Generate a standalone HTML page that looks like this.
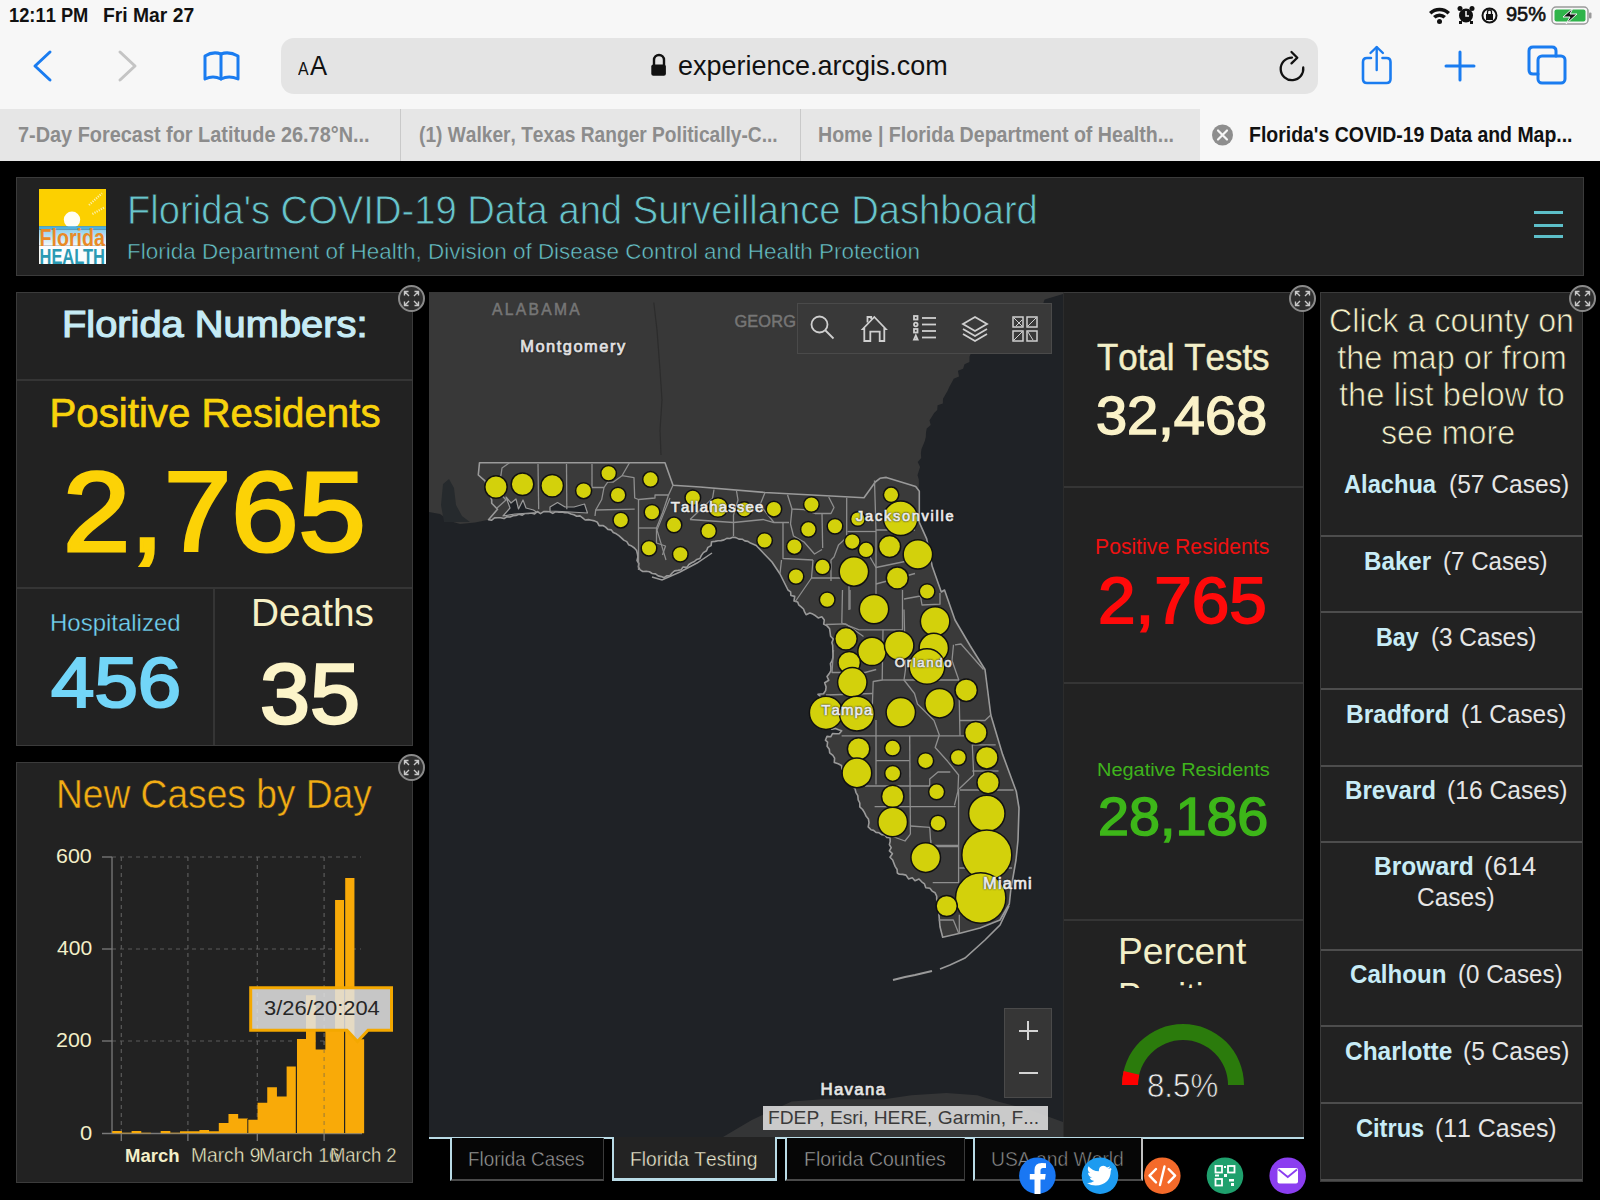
<!DOCTYPE html>
<html><head><meta charset="utf-8">
<style>
html,body{margin:0;padding:0;}
body{width:1600px;height:1200px;position:relative;overflow:hidden;background:#000;font-family:"Liberation Sans",sans-serif;}
.t{position:absolute;white-space:pre;line-height:1;transform-origin:0 0;font-kerning:none;}
.abs{position:absolute;}
.panel{position:absolute;background:#222;border:1px solid #3b3b3b;box-sizing:border-box;}
.hl{position:absolute;height:2px;background:#353535;}
.exp{position:absolute;width:27px;height:27px;border-radius:50%;background:#2e2e2e;border:2px solid #8a8a8a;box-sizing:border-box;z-index:5;}
.rowline{position:absolute;left:1321px;width:261px;height:2px;background:#4d4d4d;}
</style></head><body>
<!-- Safari chrome -->
<div class="abs" style="left:0;top:0;width:1600px;height:161px;background:#f7f7f7"></div>
<div class="abs" style="left:281px;top:37.5px;width:1037px;height:56.5px;background:#e4e4e4;border-radius:13px"></div>
<div class="abs" style="left:0;top:109px;width:1200px;height:52px;background:#e6e6e6"></div>
<div class="abs" style="left:400px;top:109px;width:1px;height:52px;background:#c9c9c9"></div>
<div class="abs" style="left:800px;top:109px;width:1px;height:52px;background:#c9c9c9"></div>
<svg class="abs" style="left:0;top:0" width="1600" height="161" viewBox="0 0 1600 161">
 <g fill="none" stroke="#1a7cf0" stroke-width="3" stroke-linecap="round" stroke-linejoin="round">
  <polyline points="50,52 35,66 50,80"/>
  <path d="M205,56 Q213,51 221,54 Q229,51 238,56 L238,79 Q229,75 221,79 Q213,75 205,79 Z"/>
  <line x1="221" y1="54" x2="221" y2="79"/>
  <path d="M1371,58 L1367,58 Q1363,58 1363,62 L1363,79 Q1363,83 1367,83 L1386.5,83 Q1390.5,83 1390.5,79 L1390.5,62 Q1390.5,58 1386.5,58 L1382.5,58" stroke-width="2.6"/>
  <polyline points="1370.5,53 1376.7,47 1382.9,53" stroke-width="2.4"/>
  <line x1="1376.7" y1="47.5" x2="1376.7" y2="70" stroke-width="2.4"/>
  <line x1="1446" y1="66" x2="1474" y2="66"/>
  <line x1="1460" y1="52" x2="1460" y2="80"/>
  <rect x="1538" y="56" width="27" height="27" rx="4"/>
  <path d="M1538,74 L1533,74 Q1529,74 1529,70 L1529,51 Q1529,47 1533,47 L1552,47 Q1556,47 1556,51 L1556,56"/>
 </g>
 <polyline points="120,52 135,66 120,80" fill="none" stroke="#c4c4c4" stroke-width="3" stroke-linecap="round" stroke-linejoin="round"/>
 <g fill="none" stroke="#111" stroke-width="2.3" stroke-linecap="round" stroke-linejoin="round">
  <path d="M1303.2,67.5 A11.3,11.3 0 1 1 1292,57.6"/>
  <polyline points="1291.5,52 1297.3,57.7 1291.5,63.4"/>
 </g>
 <!-- lock -->
 <path d="M654,65 L654,60 A5,5 0 0 1 664,60 L664,65" fill="none" stroke="#111" stroke-width="2.4"/>
 <rect x="651.3" y="64.5" width="14.6" height="11.3" rx="2" fill="#111"/>
 <!-- status icons -->
 <g fill="#111">
  <path d="M1429,12 A15,15 0 0 1 1450,12 L1447.5,14.5 A11.5,11.5 0 0 0 1431.5,14.5 Z"/>
  <path d="M1433,16 A9.5,9.5 0 0 1 1446,16 L1443.5,18.5 A6,6 0 0 0 1435.5,18.5 Z"/>
  <circle cx="1439.5" cy="21.5" r="2.5"/>
  <circle cx="1466" cy="15.5" r="7"/>
  <circle cx="1460" cy="8.5" r="2.5"/><circle cx="1472" cy="8.5" r="2.5"/>
  <rect x="1459" y="21" width="3" height="3" /><rect x="1470" y="21" width="3" height="3"/>
 </g>
 <path d="M1466,11 L1466,16 L1469,16" stroke="#f7f7f7" stroke-width="1.5" fill="none"/>
 <circle cx="1489.5" cy="15.5" r="7" fill="none" stroke="#111" stroke-width="2"/>
 <rect x="1486" y="14" width="7" height="6" fill="#111"/>
 <path d="M1487.5,14 L1487.5,12 A2,2 0 0 1 1491.5,12 L1491.5,14" stroke="#111" stroke-width="1.3" fill="none"/>
 <rect x="1552" y="7" width="36" height="17" rx="4" fill="none" stroke="#9a9a9a" stroke-width="1.5"/>
 <rect x="1554.5" y="9.5" width="31" height="12" rx="2" fill="#2fb44a"/>
 <rect x="1589" y="12.5" width="2.5" height="6" rx="1" fill="#9a9a9a"/>
 <path d="M1573,8 L1563,17 L1570,17 L1566,24 L1577,14 L1570,14 Z" fill="#111" stroke="#f7f7f7" stroke-width="1"/>
 <!-- tab close -->
 <circle cx="1222.5" cy="135" r="10.5" fill="#8e8e8e"/>
 <path d="M1218,130.5 L1227,139.5 M1227,130.5 L1218,139.5" stroke="#f7f7f7" stroke-width="2.2" stroke-linecap="round"/>
</svg>

<!-- Header -->
<div class="panel" style="left:16px;top:177px;width:1568px;height:99px"></div>
<svg class="abs" style="left:39px;top:189px" width="67" height="75" viewBox="0 0 67 75">
 <defs><linearGradient id="lg1" x1="0" y1="0" x2="0" y2="1"><stop offset="0" stop-color="#8fd0ef"/><stop offset="1" stop-color="#f2f9fc"/></linearGradient></defs>
 <rect x="0" y="0" width="67" height="37.4" fill="#fcd000"/>
 <g stroke="#fff6c0" stroke-width="2.2" stroke-dasharray="1.2,1.2" opacity="0.85">
  <line x1="50" y1="16" x2="63" y2="4.3"/><line x1="53.4" y1="25" x2="65.9" y2="18.1"/>
 </g>
 <circle cx="33" cy="30.8" r="8.2" fill="#fffef5"/>
 <rect x="0" y="37.2" width="67" height="3.4" fill="#4fb1df"/>
 <rect x="0" y="40.6" width="67" height="16" fill="url(#lg1)"/>
 <rect x="0" y="56.6" width="67" height="18.4" fill="#fbfdfe"/>
 <text x="0.5" y="56.6" font-family="Liberation Sans" font-weight="bold" font-size="23.5" fill="#e98a26" textLength="65.5" lengthAdjust="spacingAndGlyphs">Florida</text>
 <text x="0.5" y="74.6" font-family="Liberation Sans" font-weight="bold" font-size="22" fill="#2a9ab4" textLength="65.5" lengthAdjust="spacingAndGlyphs">HEALTH</text>
</svg>
<div class="abs" style="left:1534px;top:211px;width:29px;height:3px;background:#5dbfc9"></div>
<div class="abs" style="left:1534px;top:223.5px;width:29px;height:3px;background:#5dbfc9"></div>
<div class="abs" style="left:1534px;top:235px;width:29px;height:3px;background:#5dbfc9"></div>

<!-- Florida numbers -->
<div class="panel" style="left:16px;top:292px;width:397px;height:454px"></div>
<div class="hl" style="left:17px;top:378.5px;width:395px"></div>
<div class="hl" style="left:17px;top:586.5px;width:395px"></div>
<div class="abs" style="left:213px;top:587px;width:2px;height:158px;background:#353535"></div>

<!-- Chart panel -->
<div class="panel" style="left:16px;top:762px;width:397px;height:421px"></div>
<svg class="abs" style="left:0;top:0" width="420" height="1200" viewBox="0 0 420 1200">
 <g stroke="#5a5a5a" stroke-width="1.2" stroke-dasharray="4,4" fill="none">
  <line x1="112" y1="857" x2="361" y2="857"/>
  <line x1="112" y1="949" x2="361" y2="949"/>
  <line x1="112" y1="1041" x2="361" y2="1041"/>
  <line x1="121.3" y1="857" x2="121.3" y2="1133"/>
  <line x1="187.9" y1="857" x2="187.9" y2="1133"/>
  <line x1="257.3" y1="857" x2="257.3" y2="1133"/>
  <line x1="324.1" y1="857" x2="324.1" y2="1133"/>
 </g>
 <g stroke="#7a7a7a" stroke-width="1.3">
  <line x1="112" y1="857" x2="112" y2="1133.5"/>
  <line x1="102" y1="1133.5" x2="362" y2="1133.5"/>
  <line x1="102" y1="857" x2="112" y2="857"/>
  <line x1="102" y1="949" x2="112" y2="949"/>
  <line x1="102" y1="1041" x2="112" y2="1041"/>
  <line x1="121.3" y1="1133" x2="121.3" y2="1141"/>
  <line x1="187.9" y1="1133" x2="187.9" y2="1141"/>
  <line x1="257.3" y1="1133" x2="257.3" y2="1141"/>
  <line x1="324.1" y1="1133" x2="324.1" y2="1141"/>
 </g>
 <g fill="#f9aa08"><path d="M112.20,1133.20 L112.20,1130.90 L121.89,1130.90 L121.89,1132.74 L131.58,1132.74 L131.58,1130.90 L141.27,1130.90 L141.27,1132.74 L150.96,1132.74 L150.96,1133.20 L160.65,1133.20 L160.65,1130.90 L170.34,1130.90 L170.34,1132.74 L180.03,1132.74 L180.03,1131.36 L189.72,1131.36 L189.72,1131.36 L199.41,1131.36 L199.41,1129.98 L209.10,1129.98 L209.10,1131.36 L218.79,1131.36 L218.79,1123.08 L228.48,1123.08 L228.48,1113.88 L238.17,1113.88 L238.17,1118.48 L247.86,1118.48 L247.86,1119.86 L257.55,1119.86 L257.55,1102.84 L267.24,1102.84 L267.24,1087.20 L276.93,1087.20 L276.93,1096.40 L286.62,1096.40 L286.62,1066.50 L296.31,1066.50 L296.31,1038.90 L306.00,1038.90 L306.00,995.20 L315.69,995.20 L315.69,1049.48 L325.38,1049.48 L325.38,1031.08 L335.07,1031.08 L335.07,899.98 L344.76,899.98 L344.76,877.90 L354.45,877.90 L354.45,1039.36 L364.14,1039.36 L364.14,1133.20 Z"/></g>
 <line x1="296.4" y1="1039" x2="296.4" y2="1133" stroke="#222" stroke-width="1.2"/>
 <line x1="247.8" y1="1119" x2="247.8" y2="1133" stroke="#222" stroke-width="1"/>
 <line x1="344.6" y1="878" x2="344.6" y2="1133" stroke="#222" stroke-width="1.2"/>
 <g stroke="#5a5a5a" stroke-width="1" stroke-dasharray="4,4" opacity="0.6">
  <line x1="324.1" y1="1041" x2="324.1" y2="1133"/>
 </g>
 <!-- tooltip -->
 <path d="M250.7,987.8 L391.5,987.8 L391.5,1030.2 L368,1030.2 L357.5,1041.5 L347,1030.2 L250.7,1030.2 Z" fill="rgba(226,226,226,0.86)" stroke="#f4a800" stroke-width="3" stroke-linejoin="miter"/>
</svg>
<div class="t" style="left:264.16px;top:999.10px;font-size:19.48px;color:#262626;transform:scaleX(1.1258);z-index:6;">3/26/20:204</div>


<!-- Map -->
<div class="abs" style="left:429px;top:292px;width:634px;height:846px;overflow:hidden">
<svg width="634" height="846" viewBox="429 292 634 846" style="position:absolute;left:0;top:0"><rect x="429" y="292" width="634" height="846" fill="#1f2226"/><polygon fill="#343536" points="700.0,1138.0 723.0,1137.0 751.8,1120.0 791.6,1101.4 822.5,1099.3 884.4,1099.3 911.2,1095.2 946.3,1093.1 977.2,1095.2 997.8,1101.4 1030.0,1110.0 1063.0,1122.0 1063.0,1138.0"/><polygon fill="#383838" points="429.0,292.0 1063.0,292.0 1063.0,294.0 1044.6,299.4 1042.9,304.3 1037.3,303.5 1036.3,309.4 1030.5,308.3 1028.2,312.3 1024.2,313.7 1020.7,316.1 1017.3,318.4 1014.1,321.2 1010.3,323.0 1008.5,327.8 1003.0,327.0 998.8,328.7 998.8,334.7 993.7,335.1 990.4,337.4 986.7,339.3 984.6,343.1 981.4,345.6 976.8,346.4 975.9,351.5 971.3,352.4 969.5,356.6 969.4,362.1 964.5,364.2 963.1,368.7 957.9,370.7 959.0,376.6 953.7,378.7 951.6,382.8 949.4,386.7 947.5,390.9 945.3,394.8 943.0,398.7 942.8,403.5 937.6,405.3 937.2,409.9 934.1,412.9 932.0,416.6 929.5,420.3 930.7,425.0 926.7,428.4 926.0,432.6 925.8,436.9 924.8,441.1 923.2,445.1 921.4,449.2 920.9,453.6 921.2,458.1 917.7,462.0 920.1,466.9 918.7,471.2 917.5,475.3 918.8,479.6 918.9,483.7 918.5,487.9 917.1,491.9 916.5,496.1 917.8,500.3 919.3,522.3 926.7,538.8 932.2,566.3 941.3,592.0 944.5,590.0 955.0,620.0 970.0,645.5 985.0,669.5 990.8,715.0 1002.6,754.4 1016.3,791.5 1019.0,808.0 1018.0,840.0 1016.0,860.0 1010.7,890.7 1009.3,904.0 1000.0,920.0 980.0,928.0 960.0,933.3 942.7,937.3 940.0,926.7 937.9,902.5 936.7,899.5 936.7,896.1 935.1,892.8 932.1,891.1 929.9,888.3 925.8,887.7 924.5,883.9 921.7,881.8 919.0,879.0 915.0,880.8 912.3,877.7 908.5,878.9 906.0,875.1 902.7,874.4 899.3,874.2 897.3,873.0 897.1,869.5 895.1,866.4 893.9,863.2 892.7,860.0 890.0,857.2 892.4,853.7 889.4,850.9 891.2,847.6 889.4,844.6 890.2,841.4 890.0,837.7 886.9,837.4 884.7,834.9 881.6,834.7 879.1,832.8 876.0,832.4 873.6,830.4 871.1,829.8 868.2,826.9 869.0,822.7 868.4,818.9 866.0,815.9 864.5,812.6 862.6,809.5 859.8,806.9 859.8,803.0 858.2,799.8 857.8,795.7 855.9,792.3 854.9,788.2 851.8,786.3 851.5,782.6 850.0,779.7 846.9,777.8 844.1,775.7 844.4,771.6 842.1,769.1 841.4,765.5 838.2,763.7 834.3,762.4 834.6,758.1 832.9,755.4 829.7,752.9 829.3,749.2 827.1,746.2 827.6,742.1 825.4,740.2 827.0,736.4 830.7,736.8 832.5,733.6 836.1,733.8 839.4,733.6 841.7,730.8 838.6,729.8 835.5,728.4 831.8,729.3 829.4,726.1 826.2,726.0 825.9,722.4 824.7,719.0 823.4,715.6 823.3,711.9 821.2,709.3 822.6,705.7 821.8,702.6 820.1,699.9 820.5,696.5 818.0,694.3 823.5,693.7 825.6,690.6 826.1,687.0 824.7,682.8 828.8,680.3 827.0,676.5 829.3,673.6 830.9,670.6 830.9,667.2 830.4,663.7 832.1,660.7 832.9,657.5 833.0,654.5 832.8,651.5 832.8,648.5 832.7,645.5 831.9,642.5 833.2,639.0 830.6,636.2 830.1,632.5 829.6,628.8 827.0,625.9 823.7,624.1 824.3,619.9 821.8,616.7 818.2,617.9 815.6,615.8 812.8,614.1 809.8,613.1 806.1,614.7 804.6,611.9 803.5,609.0 801.2,606.9 798.7,604.8 797.6,601.9 794.0,600.9 794.7,596.4 790.9,595.5 790.6,591.8 788.0,590.0 780.0,574.0 772.0,562.0 756.2,545.5 753.4,544.2 750.5,543.1 747.9,541.4 744.8,540.9 742.2,539.2 738.9,539.1 735.9,537.6 732.8,537.3 729.9,538.5 726.8,538.4 724.0,539.9 721.0,540.6 718.0,540.8 715.0,541.4 711.6,541.7 711.1,545.6 707.9,547.4 706.5,550.7 703.4,552.6 701.4,555.4 699.9,558.5 696.8,559.4 694.4,561.5 691.6,562.8 688.9,564.5 686.9,567.3 683.1,567.0 681.1,569.8 677.9,570.4 674.6,570.9 672.1,573.0 670.0,575.6 666.6,575.9 664.3,577.7 661.3,576.6 658.2,575.9 655.5,573.9 652.2,573.5 649.4,571.8 646.2,571.3 642.8,571.5 640.2,569.9 638.4,566.9 638.9,563.5 637.0,560.5 637.9,557.0 637.4,553.7 636.6,550.5 634.4,548.0 631.7,546.1 628.6,544.7 626.8,541.6 623.8,540.1 621.4,537.8 618.9,535.6 616.3,533.8 613.3,532.6 611.3,529.9 607.9,529.4 605.6,527.1 602.9,525.5 599.1,525.6 597.4,522.3 594.5,520.9 591.5,520.2 588.5,519.6 585.2,520.0 582.6,517.8 580.0,515.9 576.7,516.2 573.9,514.8 571.0,514.0 568.1,512.7 564.9,512.8 561.9,512.0 558.9,512.2 555.8,511.6 552.8,513.4 549.7,511.7 546.6,511.5 543.6,511.6 540.5,513.6 537.4,511.5 534.6,513.9 531.3,512.9 528.3,513.4 525.1,513.4 522.3,515.1 519.0,514.3 516.0,515.4 513.0,515.7 510.0,517.0 506.9,516.8 504.0,518.6 500.7,517.7 497.6,517.8 494.5,517.9 491.7,520.2 488.5,519.7 475.0,522.5 460.0,524.0 450.0,521.0 440.0,514.0 429.0,512.0"/><polygon fill="#3a3a3a" stroke="#9a9a9a" stroke-width="1.6" stroke-linejoin="round" points="479.5,462.7 665.0,462.7 673.0,485.2 700.0,487.0 765.0,492.5 864.0,497.7 875.3,482.0 880.0,478.3 886.3,477.4 915.7,486.6 919.3,491.2 919.3,522.3 926.7,538.8 932.2,566.3 941.3,592.0 944.5,590.0 955.0,620.0 970.0,645.5 985.0,669.5 990.8,715.0 1002.6,754.4 1016.3,791.5 1019.0,808.0 1018.0,840.0 1016.0,860.0 1010.7,890.7 1009.3,904.0 1000.0,920.0 980.0,928.0 960.0,933.3 942.7,937.3 940.0,926.7 937.9,902.5 936.7,899.5 936.7,896.1 935.1,892.8 932.1,891.1 929.9,888.3 925.8,887.7 924.5,883.9 921.7,881.8 919.0,879.0 915.0,880.8 912.3,877.7 908.5,878.9 906.0,875.1 902.7,874.4 899.3,874.2 897.3,873.0 897.1,869.5 895.1,866.4 893.9,863.2 892.7,860.0 890.0,857.2 892.4,853.7 889.4,850.9 891.2,847.6 889.4,844.6 890.2,841.4 890.0,837.7 886.9,837.4 884.7,834.9 881.6,834.7 879.1,832.8 876.0,832.4 873.6,830.4 871.1,829.8 868.2,826.9 869.0,822.7 868.4,818.9 866.0,815.9 864.5,812.6 862.6,809.5 859.8,806.9 859.8,803.0 858.2,799.8 857.8,795.7 855.9,792.3 854.9,788.2 851.8,786.3 851.5,782.6 850.0,779.7 846.9,777.8 844.1,775.7 844.4,771.6 842.1,769.1 841.4,765.5 838.2,763.7 834.3,762.4 834.6,758.1 832.9,755.4 829.7,752.9 829.3,749.2 827.1,746.2 827.6,742.1 825.4,740.2 827.0,736.4 830.7,736.8 832.5,733.6 836.1,733.8 839.4,733.6 841.7,730.8 838.6,729.8 835.5,728.4 831.8,729.3 829.4,726.1 826.2,726.0 825.9,722.4 824.7,719.0 823.4,715.6 823.3,711.9 821.2,709.3 822.6,705.7 821.8,702.6 820.1,699.9 820.5,696.5 818.0,694.3 823.5,693.7 825.6,690.6 826.1,687.0 824.7,682.8 828.8,680.3 827.0,676.5 829.3,673.6 830.9,670.6 830.9,667.2 830.4,663.7 832.1,660.7 832.9,657.5 833.0,654.5 832.8,651.5 832.8,648.5 832.7,645.5 831.9,642.5 833.2,639.0 830.6,636.2 830.1,632.5 829.6,628.8 827.0,625.9 823.7,624.1 824.3,619.9 821.8,616.7 818.2,617.9 815.6,615.8 812.8,614.1 809.8,613.1 806.1,614.7 804.6,611.9 803.5,609.0 801.2,606.9 798.7,604.8 797.6,601.9 794.0,600.9 794.7,596.4 790.9,595.5 790.6,591.8 788.0,590.0 780.0,574.0 772.0,562.0 756.2,545.5 753.4,544.2 750.5,543.1 747.9,541.4 744.8,540.9 742.2,539.2 738.9,539.1 735.9,537.6 732.8,537.3 729.9,538.5 726.8,538.4 724.0,539.9 721.0,540.6 718.0,540.8 715.0,541.4 711.6,541.7 711.1,545.6 707.9,547.4 706.5,550.7 703.4,552.6 701.4,555.4 699.9,558.5 696.8,559.4 694.4,561.5 691.6,562.8 688.9,564.5 686.9,567.3 683.1,567.0 681.1,569.8 677.9,570.4 674.6,570.9 672.1,573.0 670.0,575.6 666.6,575.9 664.3,577.7 661.3,576.6 658.2,575.9 655.5,573.9 652.2,573.5 649.4,571.8 646.2,571.3 642.8,571.5 640.2,569.9 638.4,566.9 638.9,563.5 637.0,560.5 637.9,557.0 637.4,553.7 636.6,550.5 634.4,548.0 631.7,546.1 628.6,544.7 626.8,541.6 623.8,540.1 621.4,537.8 618.9,535.6 616.3,533.8 613.3,532.6 611.3,529.9 607.9,529.4 605.6,527.1 602.9,525.5 599.1,525.6 597.4,522.3 594.5,520.9 591.5,520.2 588.5,519.6 585.2,520.0 582.6,517.8 580.0,515.9 576.7,516.2 573.9,514.8 571.0,514.0 568.1,512.7 564.9,512.8 561.9,512.0 558.9,512.2 555.8,511.6 552.8,513.4 549.7,511.7 546.6,511.5 543.6,511.6 540.5,513.6 537.4,511.5 534.6,513.9 531.3,512.9 528.3,513.4 525.1,513.4 522.3,515.1 519.0,514.3 516.0,515.4 513.0,515.7 510.0,517.0 506.9,516.8 504.0,518.6 500.7,517.7 497.6,517.8 494.5,517.9 491.7,520.2 488.5,519.7 497.5,509.2 491.7,503.3 491.7,500.0 485.0,480.8 478.3,475.0"/><polygon fill="#1f2226" stroke="#9a9a9a" stroke-width="1.2" stroke-linejoin="round" points="506.0,497.0 511.0,503.0 516.0,499.0 518.5,509.0 523.0,500.0 526.0,508.0 533.5,510.0 537.0,512.5 515.0,514.0 503.0,516.0 510.0,508.0"/><polygon fill="#1f2226" stroke="#9a9a9a" stroke-width="1.2" stroke-linejoin="round" points="550.0,507.0 557.5,502.5 565.0,507.0 574.0,507.0 584.5,504.0 587.5,513.0 562.0,511.5 550.0,511.0"/><polygon fill="#262a2d" points="443.0,484.0 449.0,479.0 454.0,488.0 456.0,505.0 462.0,516.0 470.0,522.0 444.0,522.0 441.0,505.0"/><polyline fill="none" stroke="#2c2c2c" stroke-width="1.2" points="653.8,302.5 657.0,330.0 660.0,370.0 662.0,400.0 660.0,430.0 661.0,455.0"/><polyline fill="none" stroke="#8e8e8e" stroke-width="1.3" stroke-linejoin="round" points="509.5,462.7 502.0,468.0 501.0,475.0 497.0,490.0 506.0,500.0 497.0,508.0"/><polyline fill="none" stroke="#8e8e8e" stroke-width="1.3" stroke-linejoin="round" points="538.0,464.0 538.7,509.2"/><polyline fill="none" stroke="#8e8e8e" stroke-width="1.3" stroke-linejoin="round" points="566.5,464.0 566.8,509.2"/><polyline fill="none" stroke="#8e8e8e" stroke-width="1.3" stroke-linejoin="round" points="592.0,464.0 592.0,487.5 604.0,487.5 607.7,482.2 613.0,482.2 622.0,475.7 629.5,462.7"/><polyline fill="none" stroke="#8e8e8e" stroke-width="1.3" stroke-linejoin="round" points="622.0,475.7 634.0,477.7 634.7,498.0 638.5,499.5 638.5,570.0"/><polyline fill="none" stroke="#8e8e8e" stroke-width="1.3" stroke-linejoin="round" points="604.0,487.5 601.7,499.5 595.7,510.0 595.0,516.0"/><polyline fill="none" stroke="#8e8e8e" stroke-width="1.3" stroke-linejoin="round" points="595.7,510.0 634.7,509.2"/><polyline fill="none" stroke="#8e8e8e" stroke-width="1.3" stroke-linejoin="round" points="638.5,499.5 655.0,498.0 655.0,495.0 668.5,495.0 673.0,485.2"/><polyline fill="none" stroke="#8e8e8e" stroke-width="1.3" stroke-linejoin="round" points="668.5,495.0 662.5,513.0 656.5,528.0 656.5,543.0 665.5,546.0 662.5,555.0"/><polyline fill="none" stroke="#8e8e8e" stroke-width="1.3" stroke-linejoin="round" points="638.5,528.0 656.5,528.0"/><polyline fill="none" stroke="#8e8e8e" stroke-width="1.3" stroke-linejoin="round" points="690.0,519.5 733.5,522.5 763.5,519.5 774.0,522.5 789.0,522.5"/><polyline fill="none" stroke="#8e8e8e" stroke-width="1.3" stroke-linejoin="round" points="714.0,489.5 712.5,498.5 690.0,519.5"/><polyline fill="none" stroke="#8e8e8e" stroke-width="1.3" stroke-linejoin="round" points="736.5,491.0 738.0,500.0 733.5,515.0 733.5,536.0"/><polyline fill="none" stroke="#8e8e8e" stroke-width="1.3" stroke-linejoin="round" points="765.0,492.5 760.0,505.0 774.0,522.5"/><polyline fill="none" stroke="#8e8e8e" stroke-width="1.3" stroke-linejoin="round" points="787.5,494.7 792.0,509.0 804.0,509.7 815.0,513.5 831.0,513.5 834.0,507.5 828.7,497.0"/><polyline fill="none" stroke="#8e8e8e" stroke-width="1.3" stroke-linejoin="round" points="792.0,509.0 790.5,524.0 793.5,536.0 804.0,542.0 814.5,554.0 822.0,549.5"/><polyline fill="none" stroke="#8e8e8e" stroke-width="1.3" stroke-linejoin="round" points="783.0,522.5 783.0,558.5 813.0,560.0"/><polyline fill="none" stroke="#8e8e8e" stroke-width="1.3" stroke-linejoin="round" points="822.0,513.5 822.7,548.0"/><polyline fill="none" stroke="#8e8e8e" stroke-width="1.3" stroke-linejoin="round" points="846.7,497.7 846.7,537.5 838.5,545.0 834.0,557.0 831.0,560.0 831.0,581.0"/><polyline fill="none" stroke="#8e8e8e" stroke-width="1.3" stroke-linejoin="round" points="781.5,560.0 780.0,573.5"/><polyline fill="none" stroke="#8e8e8e" stroke-width="1.3" stroke-linejoin="round" points="813.0,560.0 811.5,578.0 849.0,578.0 849.0,610.0"/><polyline fill="none" stroke="#8e8e8e" stroke-width="1.3" stroke-linejoin="round" points="811.5,578.0 795.0,602.0"/><polyline fill="none" stroke="#8e8e8e" stroke-width="1.3" stroke-linejoin="round" points="874.5,480.5 876.0,530.0 876.0,609.5"/><polyline fill="none" stroke="#8e8e8e" stroke-width="1.3" stroke-linejoin="round" points="876.0,530.0 915.0,530.0"/><polyline fill="none" stroke="#8e8e8e" stroke-width="1.3" stroke-linejoin="round" points="847.5,531.5 876.0,531.5"/><polyline fill="none" stroke="#8e8e8e" stroke-width="1.3" stroke-linejoin="round" points="870.0,557.0 876.0,567.5 912.0,560.0"/><polyline fill="none" stroke="#8e8e8e" stroke-width="1.3" stroke-linejoin="round" points="876.0,584.0 915.0,573.5"/><polyline fill="none" stroke="#8e8e8e" stroke-width="1.3" stroke-linejoin="round" points="842.5,590.0 841.8,623.0 859.0,629.8 902.5,629.8 902.5,590.0"/><polyline fill="none" stroke="#8e8e8e" stroke-width="1.3" stroke-linejoin="round" points="850.0,590.0 850.0,609.5"/><polyline fill="none" stroke="#8e8e8e" stroke-width="1.3" stroke-linejoin="round" points="883.0,629.8 882.2,680.0 873.2,681.5 871.8,720.5"/><polyline fill="none" stroke="#8e8e8e" stroke-width="1.3" stroke-linejoin="round" points="904.0,609.5 905.5,669.5 904.0,680.0 958.0,680.0"/><polyline fill="none" stroke="#8e8e8e" stroke-width="1.3" stroke-linejoin="round" points="882.2,680.0 904.0,680.0"/><polyline fill="none" stroke="#8e8e8e" stroke-width="1.3" stroke-linejoin="round" points="833.5,650.0 832.0,672.5 865.0,672.5 876.2,669.5"/><polyline fill="none" stroke="#8e8e8e" stroke-width="1.3" stroke-linejoin="round" points="826.0,695.0 872.5,693.5"/><polyline fill="none" stroke="#8e8e8e" stroke-width="1.3" stroke-linejoin="round" points="904.0,680.0 914.5,693.5 917.5,704.0 934.0,720.5 939.3,735.0 935.2,747.5 947.6,761.3 958.6,775.0 957.9,791.5 954.4,805.3"/><polyline fill="none" stroke="#8e8e8e" stroke-width="1.3" stroke-linejoin="round" points="953.5,644.8 952.0,660.5 958.8,680.0 960.0,735.8"/><polyline fill="none" stroke="#8e8e8e" stroke-width="1.3" stroke-linejoin="round" points="904.0,599.0 920.5,596.0 922.0,605.0 940.0,604.2 940.0,593.0"/><polyline fill="none" stroke="#8e8e8e" stroke-width="1.3" stroke-linejoin="round" points="826.0,624.5 845.5,623.8 863.5,636.5"/><polyline fill="none" stroke="#8e8e8e" stroke-width="1.3" stroke-linejoin="round" points="841.6,735.8 964.0,735.8"/><polyline fill="none" stroke="#8e8e8e" stroke-width="1.3" stroke-linejoin="round" points="876.0,720.0 876.0,784.6"/><polyline fill="none" stroke="#8e8e8e" stroke-width="1.3" stroke-linejoin="round" points="876.0,760.6 909.7,760.6"/><polyline fill="none" stroke="#8e8e8e" stroke-width="1.3" stroke-linejoin="round" points="909.7,735.8 910.4,834.2"/><polyline fill="none" stroke="#8e8e8e" stroke-width="1.3" stroke-linejoin="round" points="865.0,786.0 929.7,786.0 929.7,779.0 938.0,772.0 950.3,772.0"/><polyline fill="none" stroke="#8e8e8e" stroke-width="1.3" stroke-linejoin="round" points="874.6,806.7 955.8,806.7"/><polyline fill="none" stroke="#8e8e8e" stroke-width="1.3" stroke-linejoin="round" points="959.2,788.8 973.7,775.0 972.3,744.8 995.7,744.8"/><polyline fill="none" stroke="#8e8e8e" stroke-width="1.3" stroke-linejoin="round" points="960.0,790.0 1013.6,790.0"/><polyline fill="none" stroke="#8e8e8e" stroke-width="1.3" stroke-linejoin="round" points="958.6,789.0 958.6,882.7 932.7,882.7"/><polyline fill="none" stroke="#8e8e8e" stroke-width="1.3" stroke-linejoin="round" points="910.4,826.0 929.7,827.3 931.0,846.5 958.6,846.5"/><polyline fill="none" stroke="#8e8e8e" stroke-width="1.3" stroke-linejoin="round" points="972.3,771.0 998.5,771.0"/><polyline fill="none" stroke="#8e8e8e" stroke-width="1.3" stroke-linejoin="round" points="889.8,835.5 905.0,841.0 910.4,834.2"/><polyline fill="none" stroke="#8e8e8e" stroke-width="1.3" stroke-linejoin="round" points="930.7,840.0 930.7,845.3 958.7,845.3"/><polyline fill="none" stroke="#8e8e8e" stroke-width="1.3" stroke-linejoin="round" points="959.3,868.0 1012.0,868.0"/><polyline fill="none" stroke="#8e8e8e" stroke-width="1.3" stroke-linejoin="round" points="959.3,914.7 959.3,933.3"/><polyline fill="none" stroke="#8e8e8e" stroke-width="1.3" stroke-linejoin="round" points="938.7,920.0 953.3,920.0 958.7,933.3"/><polyline fill="none" stroke="#8e8e8e" stroke-width="1.3" stroke-linejoin="round" points="990.8,715.0 985.0,720.5 959.5,720.5"/><polyline fill="none" stroke="#8e8e8e" stroke-width="1.3" stroke-linejoin="round" points="955.0,644.8 961.0,644.0 983.5,669.5"/><polyline fill="none" stroke="#9a9a9a" stroke-width="1.5" points="652.0,577.0 662.0,580.0 680.0,572.0 697.0,563.0 712.0,553.0"/><polyline fill="none" stroke="#8e8e8e" stroke-width="1.2" points="670.0,498.0 657.0,530.0 666.0,560.0"/><polyline fill="none" stroke="#9a9a9a" stroke-width="1.6" points="1009.0,906.0 1000.0,925.0 985.0,940.0 965.0,958.0 950.0,965.0 940.0,969.0"/><polyline fill="none" stroke="#9a9a9a" stroke-width="2" points="932.0,971.0 915.0,975.0 905.0,977.0 893.0,980.0"/><circle fill="#d3d10b" stroke="#111" stroke-width="1.5" cx="496.0" cy="487.0" r="11.2"/><circle fill="#d3d10b" stroke="#111" stroke-width="1.5" cx="522.5" cy="484.3" r="11.3"/><circle fill="#d3d10b" stroke="#111" stroke-width="1.5" cx="552.2" cy="485.8" r="11.3"/><circle fill="#d3d10b" stroke="#111" stroke-width="1.5" cx="583.6" cy="490.7" r="8.0"/><circle fill="#d3d10b" stroke="#111" stroke-width="1.5" cx="608.6" cy="473.3" r="7.8"/><circle fill="#d3d10b" stroke="#111" stroke-width="1.5" cx="618.0" cy="495.0" r="7.8"/><circle fill="#d3d10b" stroke="#111" stroke-width="1.5" cx="620.8" cy="520.1" r="7.8"/><circle fill="#d3d10b" stroke="#111" stroke-width="1.5" cx="650.5" cy="479.4" r="7.8"/><circle fill="#d3d10b" stroke="#111" stroke-width="1.5" cx="652.0" cy="512.2" r="7.8"/><circle fill="#d3d10b" stroke="#111" stroke-width="1.5" cx="674.0" cy="524.9" r="7.8"/><circle fill="#d3d10b" stroke="#111" stroke-width="1.5" cx="649.0" cy="548.3" r="7.8"/><circle fill="#d3d10b" stroke="#111" stroke-width="1.5" cx="680.3" cy="554.2" r="7.8"/><circle fill="#d3d10b" stroke="#111" stroke-width="1.5" cx="692.8" cy="497.8" r="7.8"/><circle fill="#d3d10b" stroke="#111" stroke-width="1.5" cx="718.0" cy="507.5" r="9.8"/><circle fill="#d3d10b" stroke="#111" stroke-width="1.5" cx="744.3" cy="509.4" r="7.6"/><circle fill="#d3d10b" stroke="#111" stroke-width="1.5" cx="773.9" cy="509.1" r="7.8"/><circle fill="#d3d10b" stroke="#111" stroke-width="1.5" cx="811.4" cy="504.5" r="7.8"/><circle fill="#d3d10b" stroke="#111" stroke-width="1.5" cx="708.6" cy="530.9" r="7.8"/><circle fill="#d3d10b" stroke="#111" stroke-width="1.5" cx="764.6" cy="540.5" r="7.8"/><circle fill="#d3d10b" stroke="#111" stroke-width="1.5" cx="794.4" cy="546.6" r="7.8"/><circle fill="#d3d10b" stroke="#111" stroke-width="1.5" cx="808.4" cy="529.4" r="7.8"/><circle fill="#d3d10b" stroke="#111" stroke-width="1.5" cx="796.0" cy="576.5" r="7.8"/><circle fill="#d3d10b" stroke="#111" stroke-width="1.5" cx="835.0" cy="526.2" r="7.8"/><circle fill="#d3d10b" stroke="#111" stroke-width="1.5" cx="852.2" cy="541.6" r="7.8"/><circle fill="#d3d10b" stroke="#111" stroke-width="1.5" cx="866.1" cy="549.9" r="7.8"/><circle fill="#d3d10b" stroke="#111" stroke-width="1.5" cx="857.9" cy="519.0" r="7.3"/><circle fill="#d3d10b" stroke="#111" stroke-width="1.5" cx="891.1" cy="494.8" r="7.7"/><circle fill="#d3d10b" stroke="#111" stroke-width="1.5" cx="900.6" cy="518.3" r="17.2"/><circle fill="#d3d10b" stroke="#111" stroke-width="1.5" cx="889.6" cy="546.5" r="11.0"/><circle fill="#d3d10b" stroke="#111" stroke-width="1.5" cx="917.9" cy="554.4" r="14.7"/><circle fill="#d3d10b" stroke="#111" stroke-width="1.5" cx="822.5" cy="566.9" r="7.8"/><circle fill="#d3d10b" stroke="#111" stroke-width="1.5" cx="853.9" cy="571.5" r="14.7"/><circle fill="#d3d10b" stroke="#111" stroke-width="1.5" cx="897.3" cy="577.9" r="11.0"/><circle fill="#d3d10b" stroke="#111" stroke-width="1.5" cx="927.1" cy="591.5" r="7.8"/><circle fill="#d3d10b" stroke="#111" stroke-width="1.5" cx="827.2" cy="599.8" r="7.8"/><circle fill="#d3d10b" stroke="#111" stroke-width="1.5" cx="874.0" cy="609.1" r="14.7"/><circle fill="#d3d10b" stroke="#111" stroke-width="1.5" cx="935.1" cy="621.4" r="14.7"/><circle fill="#d3d10b" stroke="#111" stroke-width="1.5" cx="846.0" cy="638.8" r="11.2"/><circle fill="#d3d10b" stroke="#111" stroke-width="1.5" cx="872.0" cy="651.4" r="14.2"/><circle fill="#d3d10b" stroke="#111" stroke-width="1.5" cx="899.2" cy="645.6" r="14.7"/><circle fill="#d3d10b" stroke="#111" stroke-width="1.5" cx="933.8" cy="648.0" r="14.7"/><circle fill="#d3d10b" stroke="#111" stroke-width="1.5" cx="927.0" cy="666.5" r="17.8"/><circle fill="#d3d10b" stroke="#111" stroke-width="1.5" cx="849.2" cy="662.7" r="11.2"/><circle fill="#d3d10b" stroke="#111" stroke-width="1.5" cx="852.3" cy="682.3" r="14.7"/><circle fill="#d3d10b" stroke="#111" stroke-width="1.5" cx="966.2" cy="690.2" r="11.2"/><circle fill="#d3d10b" stroke="#111" stroke-width="1.5" cx="939.6" cy="703.2" r="14.7"/><circle fill="#d3d10b" stroke="#111" stroke-width="1.5" cx="900.8" cy="712.3" r="14.7"/><circle fill="#d3d10b" stroke="#111" stroke-width="1.5" cx="826.0" cy="712.8" r="16.6"/><circle fill="#d3d10b" stroke="#111" stroke-width="1.5" cx="856.9" cy="713.6" r="17.4"/><circle fill="#d3d10b" stroke="#111" stroke-width="1.5" cx="975.8" cy="732.7" r="11.2"/><circle fill="#d3d10b" stroke="#111" stroke-width="1.5" cx="858.6" cy="748.9" r="11.2"/><circle fill="#d3d10b" stroke="#111" stroke-width="1.5" cx="892.6" cy="748.1" r="8.0"/><circle fill="#d3d10b" stroke="#111" stroke-width="1.5" cx="925.6" cy="760.7" r="8.0"/><circle fill="#d3d10b" stroke="#111" stroke-width="1.5" cx="958.3" cy="757.5" r="8.0"/><circle fill="#d3d10b" stroke="#111" stroke-width="1.5" cx="986.8" cy="757.7" r="11.2"/><circle fill="#d3d10b" stroke="#111" stroke-width="1.5" cx="856.9" cy="772.9" r="14.8"/><circle fill="#d3d10b" stroke="#111" stroke-width="1.5" cx="892.7" cy="773.4" r="8.0"/><circle fill="#d3d10b" stroke="#111" stroke-width="1.5" cx="988.1" cy="782.6" r="11.2"/><circle fill="#d3d10b" stroke="#111" stroke-width="1.5" cx="892.7" cy="796.5" r="11.2"/><circle fill="#d3d10b" stroke="#111" stroke-width="1.5" cx="936.6" cy="791.8" r="8.0"/><circle fill="#d3d10b" stroke="#111" stroke-width="1.5" cx="986.8" cy="813.5" r="18.2"/><circle fill="#d3d10b" stroke="#111" stroke-width="1.5" cx="892.7" cy="822.0" r="14.8"/><circle fill="#d3d10b" stroke="#111" stroke-width="1.5" cx="938.0" cy="823.2" r="8.0"/><circle fill="#d3d10b" stroke="#111" stroke-width="1.5" cx="986.8" cy="855.0" r="25.0"/><circle fill="#d3d10b" stroke="#111" stroke-width="1.5" cx="925.7" cy="857.6" r="14.8"/><circle fill="#d3d10b" stroke="#111" stroke-width="1.5" cx="980.7" cy="898.0" r="25.2"/><circle fill="#d3d10b" stroke="#111" stroke-width="1.5" cx="946.7" cy="906.0" r="10.6"/></svg>
<div class="abs" style="left:367.7px;top:10.7px;width:255.7px;height:51.6px;background:#393939;border:1px solid #4a4a4a;box-sizing:border-box"></div>
<svg class="abs" style="left:367px;top:10px" width="257" height="53" viewBox="796 302 257 53">
 <g fill="none" stroke="#cfcfcf" stroke-width="1.8">
  <circle cx="819.5" cy="324.5" r="8"/>
  <line x1="825" y1="330" x2="833.5" y2="338.5"/>
  <path d="M870.3,341 L864.3,341 L864.3,329 L862.8,329 L874.3,317 L885.8,329 L884.3,329 L884.3,341 L879.7,341 L879.7,331.6 L870.3,331.6 Z"/>
  <path d="M867.5,322.5 L867.5,317 L871.2,317 L871.2,319"/>
  <line x1="922" y1="318" x2="936" y2="318"/><line x1="922" y1="324.5" x2="936" y2="324.5"/><line x1="922" y1="331" x2="936" y2="331"/><line x1="922" y1="337.5" x2="936" y2="337.5"/>
  <rect x="914" y="316" width="3.5" height="3.5"/><circle cx="915.8" cy="324.5" r="1.8"/><rect x="914" y="329" width="3.5" height="3.5"/><path d="M914,339.5 L915.8,335.5 L917.6,339.5 Z"/>
  <path d="M963,324 L975,317 L987,324 L975,331 Z"/>
  <path d="M963,329 L975,336 L987,329"/>
  <path d="M963,334 L975,341 L987,334"/>
  <rect x="1013" y="317" width="10" height="10" stroke-width="1.5"/><rect x="1027" y="317" width="10" height="10" stroke-width="1.5"/>
  <rect x="1013" y="331" width="10" height="10" stroke-width="1.5"/><rect x="1027" y="331" width="10" height="10" stroke-width="1.5"/>
  <path d="M1014,318 L1022,326 M1016,326 L1022,320 M1028,326 L1036,318 M1014,340 L1022,332 M1028,332 L1033,340" stroke-width="1"/>
 </g>
</svg>
<!-- zoom control -->
<div class="abs" style="left:575px;top:716.2px;width:48px;height:89.5px;background:#363636;border:1px solid #4a4a4a;box-sizing:border-box"></div>
<div class="abs" style="left:589.5px;top:737.5px;width:19px;height:2px;background:#d4d4d4"></div>
<div class="abs" style="left:598px;top:729px;width:2px;height:19px;background:#d4d4d4"></div>
<div class="abs" style="left:589.5px;top:779.5px;width:19px;height:2px;background:#d4d4d4"></div>
<!-- attribution -->
<div class="abs" style="left:334px;top:814px;width:285px;height:24px;background:rgba(215,215,215,0.92)"></div>
</div>
<!-- map labels -->
<div class="t" style="left:491.97px;top:301.52px;font-size:15.63px;color:#767676;z-index:4;-webkit-text-stroke:0.50px #767676;letter-spacing:2.333px;">ALABAMA</div>
<div class="t" style="left:734.43px;top:312.65px;font-size:16.35px;color:#767676;z-index:4;-webkit-text-stroke:0.50px #767676;letter-spacing:0.168px;">GEORG</div>
<div class="t" style="left:520.25px;top:337.74px;font-size:16.42px;color:#e2e2e2;text-shadow:0 0 2px #222,0 0 2px #222,0 0 1px #222;z-index:4;-webkit-text-stroke:0.70px #e2e2e2;letter-spacing:1.517px;">Montgomery</div>
<div class="t" style="left:670.81px;top:499.87px;font-size:14.97px;color:#ececec;text-shadow:0 0 2px #222,0 0 2px #222,0 0 1px #222;z-index:4;-webkit-text-stroke:0.70px #ececec;letter-spacing:1.178px;">Tallahassee</div>
<div class="t" style="left:856.12px;top:509.34px;font-size:14.53px;color:#ececec;text-shadow:0 0 2px #222,0 0 2px #222,0 0 1px #222;z-index:4;-webkit-text-stroke:0.70px #ececec;letter-spacing:1.738px;">Jacksonville</div>
<div class="t" style="left:894.72px;top:656.45px;font-size:13.23px;color:#e6e6e6;text-shadow:0 0 2px #222,0 0 2px #222,0 0 1px #222;z-index:4;-webkit-text-stroke:0.70px #e6e6e6;letter-spacing:1.638px;">Orlando</div>
<div class="t" style="left:821.26px;top:702.97px;font-size:14.97px;color:#ececec;text-shadow:0 0 2px #222,0 0 2px #222,0 0 1px #222;z-index:4;-webkit-text-stroke:0.70px #ececec;letter-spacing:1.098px;">Tampa</div>
<div class="t" style="left:983.00px;top:874.74px;font-size:16.42px;color:#ececec;text-shadow:0 0 2px #222,0 0 2px #222,0 0 1px #222;z-index:4;-webkit-text-stroke:0.70px #ececec;letter-spacing:1.240px;">Miami</div>
<div class="t" style="left:820.47px;top:1081.57px;font-size:16.86px;color:#e6e6e6;text-shadow:0 0 2px #222,0 0 2px #222,0 0 1px #222;z-index:4;-webkit-text-stroke:0.70px #e6e6e6;letter-spacing:1.294px;">Havana</div>
<div class="t" style="left:768.42px;top:1108.75px;font-size:18.60px;color:#3a3a3a;transform:scaleX(1.0334);z-index:4;">FDEP, Esri, HERE, Garmin, F...</div>


<!-- Total tests panel -->
<div class="panel" style="left:1063px;top:292px;width:241px;height:846px;border-left-color:#2c2c2c"></div>
<div class="hl" style="left:1064px;top:485.5px;width:239px"></div>
<div class="hl" style="left:1064px;top:682px;width:239px"></div>
<div class="hl" style="left:1064px;top:919px;width:239px"></div>
<svg class="abs" style="left:1110px;top:1015px" width="150" height="80" viewBox="1110 1015 150 80">
 <path d="M1122,1085 A61,61 0 0 1 1244,1085 L1228,1085 A45,45 0 0 0 1138,1085 Z" fill="#2b7b0c"/>
 <path d="M1122,1085 A61,61 0 0 1 1123.6,1071 L1139.3,1074.7 A45,45 0 0 0 1138,1085 Z" fill="#f00"/>
</svg>

<!-- bottom strip -->
<div class="abs" style="left:429px;top:1136.5px;width:875px;height:2px;background:#b9dbe6"></div>
<div class="abs" style="left:450px;top:1138px;width:154px;height:42.5px;background:#060606;border-left:2px solid #b9dbe6;border-right:1px solid #3a3a3a;border-bottom:2px solid #4a4a4a;box-sizing:border-box"></div>
<div class="abs" style="left:612px;top:1137px;width:165px;height:44px;background:#232323;border-left:2px solid #b9dbe6;border-right:2px solid #b9dbe6;border-bottom:3px solid #b9dbe6;box-sizing:border-box"></div>
<div class="abs" style="left:785px;top:1138px;width:180px;height:42.5px;background:#060606;border-left:2px solid #b9dbe6;border-right:1px solid #3a3a3a;border-bottom:2px solid #4a4a4a;box-sizing:border-box"></div>
<div class="abs" style="left:973px;top:1138px;width:170px;height:42.5px;background:#060606;border-left:2px solid #b9dbe6;border-right:2px solid #c0c0c0;border-bottom:2px solid #4a4a4a;box-sizing:border-box"></div>

<!-- Right list -->
<div class="panel" style="left:1320px;top:292px;width:263px;height:890px"></div>
<div class="rowline" style="top:535px"></div>
<div class="rowline" style="top:611px"></div>
<div class="rowline" style="top:688px"></div>
<div class="rowline" style="top:764.5px"></div>
<div class="rowline" style="top:841px"></div>
<div class="rowline" style="top:948.5px"></div>
<div class="rowline" style="top:1025px"></div>
<div class="rowline" style="top:1102px"></div>
<div class="rowline" style="top:1179px"></div>

<!-- expand buttons -->
<div class="exp" style="left:398.3px;top:285.0px"><svg width="23" height="23" viewBox="0 0 23 23" style="position:absolute;left:0;top:0"><g stroke="#c8c8c8" stroke-width="1.4" fill="none"><path d="M4.5,8.5 L4.5,4.5 L8.5,4.5 M4.5,4.5 L9,9 M14.5,4.5 L18.5,4.5 L18.5,8.5 M18.5,4.5 L14,9 M4.5,14.5 L4.5,18.5 L8.5,18.5 M4.5,18.5 L9,14 M18.5,14.5 L18.5,18.5 L14.5,18.5 M18.5,18.5 L14,14"/></g></svg></div>
<div class="exp" style="left:398.1px;top:754.3px"><svg width="23" height="23" viewBox="0 0 23 23" style="position:absolute;left:0;top:0"><g stroke="#c8c8c8" stroke-width="1.4" fill="none"><path d="M4.5,8.5 L4.5,4.5 L8.5,4.5 M4.5,4.5 L9,9 M14.5,4.5 L18.5,4.5 L18.5,8.5 M18.5,4.5 L14,9 M4.5,14.5 L4.5,18.5 L8.5,18.5 M4.5,18.5 L9,14 M18.5,14.5 L18.5,18.5 L14.5,18.5 M18.5,18.5 L14,14"/></g></svg></div>
<div class="exp" style="left:1288.7px;top:284.8px"><svg width="23" height="23" viewBox="0 0 23 23" style="position:absolute;left:0;top:0"><g stroke="#c8c8c8" stroke-width="1.4" fill="none"><path d="M4.5,8.5 L4.5,4.5 L8.5,4.5 M4.5,4.5 L9,9 M14.5,4.5 L18.5,4.5 L18.5,8.5 M18.5,4.5 L14,9 M4.5,14.5 L4.5,18.5 L8.5,18.5 M4.5,18.5 L9,14 M18.5,14.5 L18.5,18.5 L14.5,18.5 M18.5,18.5 L14,14"/></g></svg></div>
<div class="exp" style="left:1569.3px;top:284.9px"><svg width="23" height="23" viewBox="0 0 23 23" style="position:absolute;left:0;top:0"><g stroke="#c8c8c8" stroke-width="1.4" fill="none"><path d="M4.5,8.5 L4.5,4.5 L8.5,4.5 M4.5,4.5 L9,9 M14.5,4.5 L18.5,4.5 L18.5,8.5 M18.5,4.5 L14,9 M4.5,14.5 L4.5,18.5 L8.5,18.5 M4.5,18.5 L9,14 M18.5,14.5 L18.5,18.5 L14.5,18.5 M18.5,18.5 L14,14"/></g></svg></div>


<div class="t" style="left:8.85px;top:4.77px;font-size:20.35px;color:#111;font-weight:bold;transform:scaleX(0.8998);">12:11 PM</div>
<div class="t" style="left:102.71px;top:4.77px;font-size:20.35px;color:#111;font-weight:bold;transform:scaleX(0.9481);">Fri Mar 27</div>
<div class="t" style="left:1506.36px;top:5.21px;font-size:19.48px;color:#111;transform:scaleX(1.0274);-webkit-text-stroke:0.60px #111;">95%</div>
<div class="t" style="left:297.97px;top:59.62px;font-size:18.17px;color:#111;transform:scaleX(0.8716);">A</div>
<div class="t" style="left:309.95px;top:51.62px;font-size:27.62px;color:#111;transform:scaleX(0.9284);">A</div>
<div class="t" style="left:677.85px;top:51.59px;font-size:27.65px;color:#111;transform:scaleX(0.9757);">experience.arcgis.com</div>
<div class="t" style="left:18.15px;top:124.71px;font-size:21.37px;color:#8c8c8c;font-weight:bold;transform:scaleX(0.9309);">7-Day Forecast for Latitude 26.78°N...</div>
<div class="t" style="left:419.05px;top:124.71px;font-size:21.37px;color:#8c8c8c;font-weight:bold;transform:scaleX(0.8966);">(1) Walker, Texas Ranger Politically-C...</div>
<div class="t" style="left:817.69px;top:124.71px;font-size:21.37px;color:#8c8c8c;font-weight:bold;transform:scaleX(0.9174);">Home | Florida Department of Health...</div>
<div class="t" style="left:1249.40px;top:124.71px;font-size:21.37px;color:#111;font-weight:bold;transform:scaleX(0.9108);">Florida's COVID-19 Data and Map...</div>
<div class="t" style="left:126.97px;top:189.69px;font-size:40.41px;color:#68c5cc;transform:scaleX(0.9444);-webkit-text-stroke:0.80px #222;">Florida's COVID-19 Data and Surveillance Dashboard</div>
<div class="t" style="left:127.41px;top:241.76px;font-size:21.37px;color:#68c5cc;transform:scaleX(1.0520);-webkit-text-stroke:0.50px #222;">Florida Department of Health, Division of Disease Control and Health Protection</div>
<div class="t" style="left:62.33px;top:305.85px;font-size:37.50px;color:#c6ebf5;transform:scaleX(1.0623);-webkit-text-stroke:1.20px #c6ebf5;">Florida Numbers:</div>
<div class="t" style="left:49.45px;top:393.86px;font-size:40.26px;color:#f8d20c;-webkit-text-stroke:0.70px #f8d20c;">Positive Residents</div>
<div class="t" style="left:62.72px;top:455.24px;font-size:114.04px;color:#fcd206;transform:scaleX(1.0609);-webkit-text-stroke:3.20px #fcd206;">2,765</div>
<div class="t" style="left:49.68px;top:610.92px;font-size:24.13px;color:#72d3f2;transform:scaleX(0.9938);-webkit-text-stroke:0.30px #222;">Hospitalized</div>
<div class="t" style="left:50.61px;top:647.64px;font-size:70.34px;color:#72d5f8;transform:scaleX(1.1095);-webkit-text-stroke:2.20px #72d5f8;">456</div>
<div class="t" style="left:251.42px;top:594.42px;font-size:38.95px;color:#f6f0c6;transform:scaleX(0.9965);">Deaths</div>
<div class="t" style="left:260.48px;top:651.25px;font-size:85.10px;color:#fcf4c9;transform:scaleX(1.0564);-webkit-text-stroke:2.60px #fcf4c9;">35</div>
<div class="t" style="left:56.20px;top:774.61px;font-size:39.97px;color:#f3ad14;transform:scaleX(0.9292);-webkit-text-stroke:0.50px #222;">New Cases by Day</div>
<div class="t" style="left:56.11px;top:847.46px;font-size:19.77px;color:#f3efc8;transform:scaleX(1.0830);">600</div>
<div class="t" style="left:56.72px;top:939.46px;font-size:19.77px;color:#f3efc8;transform:scaleX(1.0642);">400</div>
<div class="t" style="left:56.12px;top:1031.46px;font-size:19.77px;color:#f3efc8;transform:scaleX(1.0826);">200</div>
<div class="t" style="left:79.64px;top:1123.66px;font-size:19.77px;color:#f3efc8;transform:scaleX(1.1110);">0</div>
<div class="t" style="left:124.56px;top:1146.60px;font-size:18.90px;color:#f3efc8;font-weight:bold;transform:scaleX(0.9809);">March</div>
<div class="t" style="left:191.22px;top:1146.31px;font-size:19.48px;color:#f3efc8;transform:scaleX(0.9862);-webkit-text-stroke:0.40px #222;">March 9</div>
<div class="t" style="left:259.21px;top:1146.31px;font-size:19.48px;color:#f3efc8;transform:scaleX(0.9958);-webkit-text-stroke:0.40px #222;">March 16</div>
<div class="t" style="left:330.09px;top:1146.31px;font-size:19.48px;color:#f3efc8;transform:scaleX(0.9457);-webkit-text-stroke:0.40px #222;">March 2</div>
<div class="t" style="left:1096.67px;top:340.13px;font-size:36.05px;color:#f3efc8;transform:scaleX(0.9678);-webkit-text-stroke:0.50px #f3efc8;">Total Tests</div>
<div class="t" style="left:1096.47px;top:390.36px;font-size:52.72px;color:#faf2c8;transform:scaleX(1.0614);-webkit-text-stroke:1.40px #faf2c8;">32,468</div>
<div class="t" style="left:1094.96px;top:536.09px;font-size:22.09px;color:#ee1111;transform:scaleX(0.9596);">Positive Residents</div>
<div class="t" style="left:1097.60px;top:569.16px;font-size:64.18px;color:#ff0a0a;transform:scaleX(1.0518);-webkit-text-stroke:1.80px #ff0a0a;">2,765</div>
<div class="t" style="left:1096.56px;top:761.40px;font-size:18.90px;color:#3fb41c;transform:scaleX(1.0550);">Negative Residents</div>
<div class="t" style="left:1097.75px;top:790.69px;font-size:52.87px;color:#3db619;transform:scaleX(1.0535);-webkit-text-stroke:1.50px #3db619;">28,186</div>
<div class="t" style="left:1117.95px;top:934.23px;font-size:36.34px;color:#f3efc8;transform:scaleX(1.0247);">Percent</div>
<div style="position:absolute;left:1064px;top:970px;width:239px;height:17.5px;overflow:hidden"><div class="t" style="left:54.13px;top:9.23px;font-size:36.34px;color:#f3efc8;transform:scaleX(0.9622);">Positive</div>
</div>
<div class="t" style="left:1147.29px;top:1068.60px;font-size:33.95px;color:#ececec;transform:scaleX(0.9196);-webkit-text-stroke:0.70px #222;">8.5%</div>
<div class="t" style="left:1329.42px;top:305.18px;font-size:32.56px;color:#f3efc8;transform:scaleX(0.9883);-webkit-text-stroke:0.70px #222;">Click a county on</div>
<div class="t" style="left:1337.16px;top:342.38px;font-size:32.56px;color:#f3efc8;-webkit-text-stroke:0.70px #222;">the map or from</div>
<div class="t" style="left:1339.15px;top:379.38px;font-size:32.56px;color:#f3efc8;transform:scaleX(1.0065);-webkit-text-stroke:0.70px #222;">the list below to</div>
<div class="t" style="left:1381.05px;top:416.68px;font-size:32.56px;color:#f3efc8;transform:scaleX(0.9883);-webkit-text-stroke:0.70px #222;">see more</div>
<div class="t" style="left:1343.81px;top:471.62px;font-size:25.73px;color:#c8ecf6;font-weight:bold;transform:scaleX(0.9196);">Alachua</div>
<div class="t" style="left:1448.98px;top:471.62px;font-size:25.73px;color:#e6e6e6;transform:scaleX(0.9549);">(57 Cases)</div>
<div class="t" style="left:1364.08px;top:548.92px;font-size:25.73px;color:#c8ecf6;font-weight:bold;transform:scaleX(0.9394);">Baker</div>
<div class="t" style="left:1443.40px;top:548.92px;font-size:25.73px;color:#e6e6e6;transform:scaleX(0.9380);">(7 Cases)</div>
<div class="t" style="left:1376.34px;top:625.32px;font-size:25.73px;color:#c8ecf6;font-weight:bold;transform:scaleX(0.9066);">Bay</div>
<div class="t" style="left:1431.19px;top:625.32px;font-size:25.73px;color:#e6e6e6;transform:scaleX(0.9453);">(3 Cases)</div>
<div class="t" style="left:1345.96px;top:701.82px;font-size:25.73px;color:#c8ecf6;font-weight:bold;transform:scaleX(0.9534);">Bradford</div>
<div class="t" style="left:1460.99px;top:701.82px;font-size:25.73px;color:#e6e6e6;transform:scaleX(0.9453);">(1 Cases)</div>
<div class="t" style="left:1345.09px;top:778.32px;font-size:25.73px;color:#c8ecf6;font-weight:bold;transform:scaleX(0.9369);">Brevard</div>
<div class="t" style="left:1447.37px;top:778.32px;font-size:25.73px;color:#e6e6e6;transform:scaleX(0.9574);">(16 Cases)</div>
<div class="t" style="left:1373.85px;top:854.02px;font-size:25.73px;color:#c8ecf6;font-weight:bold;transform:scaleX(0.9561);">Broward</div>
<div class="t" style="left:1484.38px;top:854.02px;font-size:25.73px;color:#e6e6e6;transform:scaleX(1.0154);">(614</div>
<div class="t" style="left:1349.91px;top:961.92px;font-size:25.73px;color:#c8ecf6;font-weight:bold;transform:scaleX(0.9377);">Calhoun</div>
<div class="t" style="left:1458.30px;top:961.92px;font-size:25.73px;color:#e6e6e6;transform:scaleX(0.9389);">(0 Cases)</div>
<div class="t" style="left:1344.60px;top:1039.02px;font-size:25.73px;color:#c8ecf6;font-weight:bold;transform:scaleX(0.9506);">Charlotte</div>
<div class="t" style="left:1462.88px;top:1039.02px;font-size:25.73px;color:#e6e6e6;transform:scaleX(0.9536);">(5 Cases)</div>
<div class="t" style="left:1356.03px;top:1116.12px;font-size:25.73px;color:#c8ecf6;font-weight:bold;transform:scaleX(0.9181);">Citrus</div>
<div class="t" style="left:1435.16px;top:1116.12px;font-size:25.73px;color:#e6e6e6;transform:scaleX(0.9671);">(11 Cases)</div>
<div class="t" style="left:1417.45px;top:884.82px;font-size:25.73px;color:#e6e6e6;transform:scaleX(0.9531);">Cases)</div>
<div class="t" style="left:468.20px;top:1148.74px;font-size:20.20px;color:#a0a0a0;transform:scaleX(0.9358);-webkit-text-stroke:0.50px #060606;">Florida Cases</div>
<div class="t" style="left:630.22px;top:1148.82px;font-size:20.06px;color:#f0ecd2;transform:scaleX(0.9621);-webkit-text-stroke:0.40px #232323;">Florida Testing</div>
<div class="t" style="left:803.65px;top:1148.74px;font-size:20.20px;color:#a0a0a0;transform:scaleX(0.9639);-webkit-text-stroke:0.50px #060606;">Florida Counties</div>
<div class="t" style="left:990.96px;top:1148.74px;font-size:20.20px;color:#8c8c8c;transform:scaleX(0.9547);-webkit-text-stroke:0.50px #060606;">USA and World</div>


<!-- social -->
<svg class="abs" style="left:1010px;top:1150px;z-index:8" width="300" height="50" viewBox="1010 1150 300 50">
 <circle cx="1037.4" cy="1175.7" r="18.3" fill="#1977f3"/>
 <path d="M1040.5,1194 L1040.5,1179.5 L1045,1179.5 L1045.7,1174 L1040.5,1174 L1040.5,1170.5 Q1040.5,1168 1043,1168 L1046,1168 L1046,1163.3 Q1044,1163 1041.8,1163 Q1034.5,1163 1034.5,1170 L1034.5,1174 L1029.8,1174 L1029.8,1179.5 L1034.5,1179.5 L1034.5,1194 Z" fill="#fff"/>
 <circle cx="1100" cy="1175.7" r="18.3" fill="#1d9bf0"/>
 <path d="M1111,1168 Q1109.5,1168.7 1108,1168.9 Q1109.6,1167.9 1110.2,1166.2 Q1108.7,1167.1 1107,1167.4 Q1105.4,1165.8 1103.2,1165.8 Q1098.7,1166 1098.8,1171.3 Q1092.5,1171 1088.5,1166.2 Q1086.5,1170.2 1090.2,1173.2 Q1089,1173.2 1088,1172.6 Q1088.2,1176.5 1091.8,1177.5 Q1090.7,1177.8 1089.7,1177.6 Q1090.7,1180.8 1094.2,1181 Q1091,1183.4 1087,1183 Q1091,1185.6 1095.6,1185.6 Q1110.5,1185 1110.8,1170.6 Q1112,1169.6 1111,1168 Z" fill="#fff"/>
 <circle cx="1162.3" cy="1175.7" r="18.3" fill="#f46a2a"/>
 <path d="M1156,1169 L1149.5,1175.7 L1156,1182.4 M1168.6,1169 L1175.1,1175.7 L1168.6,1182.4 M1164.5,1166.5 L1160,1185" fill="none" stroke="#fff" stroke-width="2.4" stroke-linecap="round" stroke-linejoin="round"/>
 <circle cx="1225" cy="1175.7" r="18.3" fill="#1fa06d"/>
 <g fill="none" stroke="#fff" stroke-width="1.8">
  <rect x="1215.5" y="1166" width="6.5" height="6.5"/><rect x="1228" y="1166" width="6.5" height="6.5"/><rect x="1215.5" y="1179" width="6.5" height="6.5"/>
 </g>
 <g fill="#fff"><rect x="1224" y="1166" width="2" height="2"/><rect x="1229" y="1179" width="5" height="2.5"/><rect x="1224" y="1174" width="3" height="3"/><rect x="1231" y="1183" width="3" height="3"/><rect x="1215" y="1174.5" width="4" height="2"/></g>
 <circle cx="1287.7" cy="1175.7" r="18.3" fill="#8b3ef0"/>
 <rect x="1277.5" y="1168" width="20.5" height="15.5" rx="2" fill="#fff"/>
 <path d="M1278.5,1169.5 L1287.75,1177 L1297,1169.5" fill="none" stroke="#8b3ef0" stroke-width="1.8"/>
</svg>
</body></html>
